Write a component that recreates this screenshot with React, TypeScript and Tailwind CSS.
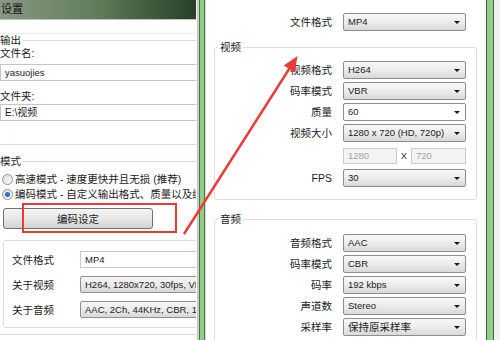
import React from "react";

function Caret() {
  return (
    <svg width="6" height="3" viewBox="0 0 6 3">
      <path d="M0 0H6L3 3Z" fill="#1a1a1a" />
    </svg>
  );
}

function Select({ value, white, cjk }: { value: string; white?: boolean; cjk?: boolean }) {
  return (
    <div
      className={`flex h-[18px] w-[123px] shrink-0 items-center justify-between rounded-[2px] border border-[#8b8d90] pl-[4px] pr-[5px] ${
        white ? "bg-white" : "bg-linear-to-b from-[#f9f9f9] via-[#ececec] to-[#d9d9d9]"
      }`}
    >
      <span className={cjk ? "text-[10.5px] leading-[12px]" : "text-[9.5px] leading-[12px]"}>{value}</span>
      <Caret />
    </div>
  );
}

function Row({ label, w = 114, children }: { label: string; w?: number; children: React.ReactNode }) {
  return (
    <div className="flex items-center gap-[11px]">
      <div className="shrink-0 text-right text-[10.5px] leading-[12px]" style={{ width: w }}>
        {label}
      </div>
      {children}
    </div>
  );
}

function Radio({ checked, label }: { checked?: boolean; label: string }) {
  return (
    <div className="flex h-[14px] items-center gap-[2px] whitespace-nowrap pl-[2px]">
      <span className="flex h-[11px] w-[11px] shrink-0 items-center justify-center rounded-full border border-[#8e9297] bg-linear-to-br from-[#dcdcdc] to-[#fbfbfb]">
        {checked && <span className="h-[5px] w-[5px] rounded-full bg-[#2f6fc2]" />}
      </span>
      <span className="text-[10.5px] leading-[12px]">{label}</span>
    </div>
  );
}

function InfoRow({ label, value, plain }: { label: string; value: string; plain?: boolean }) {
  return (
    <div className="flex items-center">
      <div className="w-[68px] shrink-0 text-[10.5px] leading-[12px]">{label}</div>
      <div
        className={`h-[17px] w-[180px] shrink-0 whitespace-nowrap pl-[4px] text-[9.5px] leading-[15px] ${
          plain
            ? "border border-[#c5c9ce] bg-white"
            : "rounded-[2px] border border-[#8e9095] bg-linear-to-b from-[#f6f6f6] via-[#ebebeb] to-[#d8d8d8]"
        }`}
      >
        {value}
      </div>
    </div>
  );
}

export default function App() {
  return (
    <div className="relative flex h-[340px] w-[500px] overflow-hidden bg-[#f2f2f2] font-['Liberation_Sans','Noto_Sans_CJK_SC',sans-serif] text-[#1b1b1b]">
      {/* left window: 设置 */}
      <div className="flex h-full w-[197px] shrink-0 flex-col overflow-hidden border-r border-[#f4f4f4] bg-white">
        <div className="h-[20px] shrink-0 border-b border-[#b9c6b7] bg-linear-to-r from-[#8a9884] via-[#5f7c5a] to-[#273f28] pl-[1px] text-[11px] leading-[19px] text-[#151515]">
          设置
        </div>
        <div className="mt-[13px] w-[260px] shrink-0 border-t border-[#ececec]">
          <fieldset className="-ml-[10px] rounded-[3px] border border-[#d6dbe0] pb-[23px] pl-[9px]">
            <legend className="pr-[2px] text-[10.5px] leading-[12px]">输出</legend>
            <div className="mt-[1px] text-[10.5px] leading-[12px]">文件名:</div>
            <div className="mt-[5px] h-[17px] w-[240px] border border-[#c2c6cb] bg-white pl-[4px] text-[9.5px] leading-[15px]">
              yasuojies
            </div>
            <div className="mt-[9px] text-[10.5px] leading-[12px]">文件夹:</div>
            <div className="mt-[2px] h-[17px] w-[240px] border border-[#c2c6cb] bg-white pl-[4px] text-[10px] leading-[15px]">
              E:\视频
            </div>
          </fieldset>

          <fieldset className="-ml-[10px] mt-[10px] rounded-[3px] border border-[#d6dbe0] pb-[6px] pl-[9px]">
            <legend className="pr-[2px] text-[10.5px] leading-[12px]">模式</legend>
            <div className="mt-[5px]">
              <Radio label="高速模式 - 速度更快并且无损 (推荐)" />
            </div>
            <div className="mt-[1px]">
              <Radio checked label="编码模式 - 自定义输出格式、质量以及编码参数" />
            </div>
            <button className="ml-[3px] mt-[7px] flex h-[21px] w-[150px] items-center justify-center rounded-[3px] border border-[#707070] bg-linear-to-b from-[#f3f3f3] via-[#e8e8e8] to-[#d2d2d2] text-[10.5px] leading-[12px]">
              编码设定
            </button>
            <div className="ml-[3px] mt-[11px] flex h-[88px] w-[250px] flex-col gap-[8px] rounded-[3px] border border-[#d8dee3] pl-[8px] pt-[10px]">
              <InfoRow label="文件格式" value="MP4" plain />
              <InfoRow label="关于视频" value="H264, 1280x720, 30fps, VBR" />
              <InfoRow label="关于音频" value="AAC, 2Ch, 44KHz, CBR, 192kbps" />
            </div>
          </fieldset>
        </div>
      </div>

      {/* frame between windows */}
      <div className="flex h-full w-[8px] shrink-0">
        <div className="w-[2px] bg-[#c6cec5]" />
        <div className="w-[1px] bg-[#4e744e]" />
        <div className="w-[4px] bg-[#8fcf8a]" />
        <div className="w-[1px] bg-[#4e744e]" />
      </div>

      {/* right window: 编码设定 */}
      <div className="h-full w-[281px] shrink-0 border-l border-[#d9d9d9] bg-white">
        <div className="mt-[13px]">
          <Row label="文件格式" w={126}>
            <Select value="MP4" />
          </Row>
        </div>

        <fieldset className="ml-[8px] mt-[10px] w-[263px] rounded-[3px] border border-[#dcdfe3] pb-[12px] pl-[3px] pr-[10px]">
          <legend className="px-[2px] text-[10.5px] leading-[12px]">视频</legend>
          <div className="mt-[8px] flex flex-col gap-[3px]">
            <Row label="视频格式">
              <Select value="H264" />
            </Row>
            <Row label="码率模式">
              <Select value="VBR" />
            </Row>
            <Row label="质量">
              <Select value="60" white />
            </Row>
            <Row label="视频大小">
              <Select value="1280 x 720 (HD, 720p)" />
            </Row>
          </div>
          <div className="mt-[6px] flex h-[16px] items-center pl-[125px]">
            <div className="h-[16px] w-[54px] border border-[#c8cacd] bg-[#f4f4f4] pl-[4px] text-[9.5px] leading-[14px] text-[#a2a2a2]">
              1280
            </div>
            <div className="w-[14px] text-center text-[9.5px] leading-[12px] text-[#333]">X</div>
            <div className="h-[16px] w-[55px] border border-[#c8cacd] bg-[#f4f4f4] pl-[4px] text-[9.5px] leading-[14px] text-[#a2a2a2]">
              720
            </div>
          </div>
          <div className="mt-[5px]">
            <Row label="FPS">
              <Select value="30" />
            </Row>
          </div>
        </fieldset>

        <fieldset className="ml-[8px] mt-[13px] w-[263px] rounded-[3px] border border-[#dcdfe3] pb-[12px] pl-[3px] pr-[10px]">
          <legend className="px-[2px] text-[10.5px] leading-[12px]">音频</legend>
          <div className="mt-[9px] flex flex-col gap-[3px]">
            <Row label="音频格式">
              <Select value="AAC" />
            </Row>
            <Row label="码率模式">
              <Select value="CBR" />
            </Row>
            <Row label="码率">
              <Select value="192 kbps" />
            </Row>
            <Row label="声道数">
              <Select value="Stereo" />
            </Row>
            <Row label="采样率">
              <Select value="保持原采样率" cjk />
            </Row>
          </div>
        </fieldset>
      </div>

      {/* right frame */}
      <div className="flex h-full w-[8px] shrink-0">
        <div className="w-[1px] bg-[#3f613f]" />
        <div className="w-[6px] bg-[#8fcf8a]" />
        <div className="w-[1px] bg-[#3f613f]" />
      </div>
      <div className="h-full flex-1 bg-[#f1f1f1]" />

      {/* red annotation */}
      <svg className="pointer-events-none absolute left-0 top-0" width="500" height="340">
        <rect x="23" y="204" width="153" height="28" fill="none" stroke="#ee3a33" strokeWidth="2" />
        <line x1="184" y1="234" x2="291" y2="66" stroke="#ee3a33" strokeWidth="2.4" />
        <polygon points="297.5,56 283.8,65.4 294.8,72.4" fill="#ee3a33" />
      </svg>
    </div>
  );
}
